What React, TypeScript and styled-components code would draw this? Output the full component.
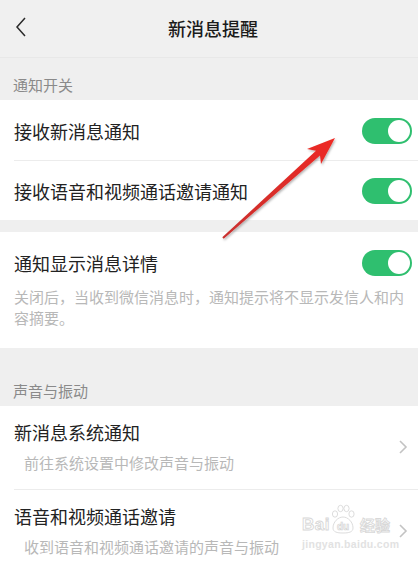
import styled, { createGlobalStyle } from "styled-components";

const GlobalStyle = createGlobalStyle`
  html, body {
    margin: 0;
    padding: 0;
    background: #efefef;
  }
  body {
    font-family: "Noto Sans CJK SC", "Noto Sans", sans-serif;
    -webkit-font-smoothing: antialiased;
  }
`;

const Screen = styled.div`
  position: relative;
  width: 418px;
  height: 562px;
  overflow: hidden;
  background: #efefef;
`;

const Header = styled.header`
  height: 57px;
  display: flex;
  align-items: center;
  justify-content: center;
  position: relative;
  padding-left: 8px;
  background: #f0f0f0;
  border-bottom: 1px solid #e8e8e8;
`;

const BackButton = styled.button`
  position: absolute;
  left: 9px;
  top: 14px;
  width: 24px;
  height: 26px;
  border: 0;
  padding: 0;
  background: none;
  display: flex;
  align-items: center;
  justify-content: center;
`;

const Title = styled.h1`
  margin: -2px 0 0;
  font-size: 18px;
  font-weight: 500;
  color: #1b1b1b;
  line-height: 24px;
`;

const SectionLabel = styled.div<{ $height: number }>`
  height: ${(p) => p.$height}px;
  display: flex;
  align-items: flex-end;
  padding: 0 13px 5px;
  box-sizing: border-box;
  font-size: 15px;
  line-height: 20px;
  color: #8a8a8a;
`;

const Group = styled.section<{ $gap?: number }>`
  background: #ffffff;
  margin-top: ${(p) => p.$gap ?? 0}px;
`;

const Row = styled.div<{ $height?: number; $divider?: boolean }>`
  position: relative;
  display: flex;
  align-items: center;
  justify-content: space-between;
  padding: 0 6px 0 14px;
  height: ${(p) => p.$height ?? 60}px;
  &::after {
    content: "";
    display: ${(p) => (p.$divider ? "block" : "none")};
    position: absolute;
    left: 14px;
    right: 0;
    bottom: 0;
    height: 1px;
    background: #ececec;
  }
`;

const RowTitle = styled.span`
  font-size: 18px;
  line-height: 24px;
  color: #222222;
`;

const DetailBlock = styled.div`
  padding: 18px 6px 20px 14px;
`;

const DetailHead = styled.div`
  display: flex;
  align-items: center;
  justify-content: space-between;
  height: 26px;
`;

const Desc = styled.p`
  margin: 10px 6px 0 0;
  font-size: 15px;
  line-height: 21px;
  color: #b8b8b8;
`;

const LinkRow = styled.div<{ $divider?: boolean }>`
  position: relative;
  display: flex;
  align-items: center;
  justify-content: space-between;
  padding: 14px 10px 17px 14px;
  &::after {
    content: "";
    display: ${(p) => (p.$divider ? "block" : "none")};
    position: absolute;
    left: 14px;
    right: 0;
    bottom: 0;
    height: 1px;
    background: #ececec;
  }
`;

const LinkText = styled.div`
  display: flex;
  flex-direction: column;
`;

const LinkSub = styled.span`
  margin: 9px 0 0 10px;
  font-size: 15px;
  line-height: 20px;
  color: #b8b8b8;
`;

const Toggle = styled.span<{ $on: boolean }>`
  position: relative;
  display: inline-block;
  width: 50px;
  height: 26px;
  border-radius: 13px;
  background: ${(p) => (p.$on ? "#2fbf6f" : "#e5e5e5")};
  &::after {
    content: "";
    position: absolute;
    top: 2px;
    left: ${(p) => (p.$on ? "26px" : "2px")};
    width: 22px;
    height: 22px;
    border-radius: 50%;
    background: #ffffff;
  }
`;

const Watermark = styled.div`
  position: absolute;
  left: 302px;
  top: 504px;
  display: flex;
  flex-direction: column;
  align-items: flex-start;
  pointer-events: none;
`;

const MarkTop = styled.div`
  display: flex;
  align-items: flex-end;
  color: #ffffff;
  -webkit-text-stroke: 0.9px #d8d8d8;
`;

const MarkLatin = styled.span`
  font-family: "Liberation Sans", sans-serif;
  font-size: 17px;
  line-height: 18px;
  font-weight: 700;
  letter-spacing: 0.5px;
`;

const MarkCn = styled.span`
  font-family: "Noto Sans CJK SC", sans-serif;
  font-size: 15px;
  line-height: 18px;
  font-weight: 700;
  margin-left: 4px;
`;

const MarkUrl = styled.span`
  margin-top: 4px;
  font-family: "Liberation Sans", sans-serif;
  font-size: 10.5px;
  font-weight: 700;
  line-height: 12px;
  color: #e2e2e2;
  letter-spacing: 0.3px;
`;

const Overlay = styled.svg`
  position: absolute;
  left: 0;
  top: 0;
  pointer-events: none;
`;

const Chevron = () => (
  <svg width="10" height="16" viewBox="0 0 10 16">
    <path d="M2 2l6 6-6 6" fill="none" stroke="#c3c3c3" strokeWidth="1.6" />
  </svg>
);

const Paw = () => (
  <svg width="26" height="30" viewBox="0 0 26 30">
    <g fill="#ffffff" stroke="#d8d8d8" strokeWidth="0.9">
      <ellipse cx="5" cy="10" rx="2.6" ry="3.2" />
      <ellipse cx="10.5" cy="4.5" rx="2.6" ry="3.2" />
      <ellipse cx="16.5" cy="4.5" rx="2.6" ry="3.2" />
      <ellipse cx="21.5" cy="10" rx="2.6" ry="3.2" />
      <path d="M3 24c0-6 5-11 10-11s10 5 10 11c0 4-4 5-10 5s-10-1-10-5z" />
    </g>
    <text
      x="13"
      y="26"
      textAnchor="middle"
      fontSize="10"
      fontFamily="Liberation Sans, sans-serif"
      fontWeight="700"
      fill="#ffffff"
      stroke="#d4d4d4"
      strokeWidth="0.7"
    >
      du
    </text>
  </svg>
);

export default function App() {
  return (
    <Screen>
      <GlobalStyle />
      <Header>
        <BackButton aria-label="返回">
          <svg width="12" height="22" viewBox="0 0 12 22">
            <path d="M10 2L2 11l8 9" fill="none" stroke="#2a2a2a" strokeWidth="1.5" />
          </svg>
        </BackButton>
        <Title>新消息提醒</Title>
      </Header>

      <SectionLabel $height={42}>通知开关</SectionLabel>
      <Group>
        <Row $height={61} $divider>
          <RowTitle>接收新消息通知</RowTitle>
          <Toggle $on />
        </Row>
        <Row $height={59}>
          <RowTitle>接收语音和视频通话邀请通知</RowTitle>
          <Toggle $on />
        </Row>
      </Group>

      <Group $gap={12}>
        <DetailBlock>
          <DetailHead>
            <RowTitle>通知显示消息详情</RowTitle>
            <Toggle $on />
          </DetailHead>
          <Desc>关闭后，当收到微信消息时，通知提示将不显示发信人和内容摘要。</Desc>
        </DetailBlock>
      </Group>

      <SectionLabel $height={58}>声音与振动</SectionLabel>
      <Group>
        <LinkRow $divider>
          <LinkText>
            <RowTitle>新消息系统通知</RowTitle>
            <LinkSub>前往系统设置中修改声音与振动</LinkSub>
          </LinkText>
          <Chevron />
        </LinkRow>
        <LinkRow>
          <LinkText>
            <RowTitle>语音和视频通话邀请</RowTitle>
            <LinkSub>收到语音和视频通话邀请的声音与振动</LinkSub>
          </LinkText>
          <Chevron />
        </LinkRow>
      </Group>

      <Watermark>
        <MarkTop>
          <MarkLatin>Bai</MarkLatin>
          <Paw />
          <MarkCn>经验</MarkCn>
        </MarkTop>
        <MarkUrl>jingyan.baidu.com</MarkUrl>
      </Watermark>

      <Overlay width="418" height="562" viewBox="0 0 418 562">
        <defs>
          <linearGradient id="arrowFill" x1="0" y1="1" x2="1" y2="0">
            <stop offset="0" stopColor="#c9302f" />
            <stop offset="1" stopColor="#ee2a24" />
          </linearGradient>
          <filter id="arrowShadow" x="-20%" y="-20%" width="140%" height="140%">
            <feDropShadow dx="1" dy="1.5" stdDeviation="1.2" floodColor="#000" floodOpacity="0.3" />
          </filter>
        </defs>
        <polygon
          points="335,138 321,164 320,155.5 223.7,238.7 222.3,237.3 316,150.8 307,149"
          fill="url(#arrowFill)"
          filter="url(#arrowShadow)"
        />
      </Overlay>
    </Screen>
  );
}
